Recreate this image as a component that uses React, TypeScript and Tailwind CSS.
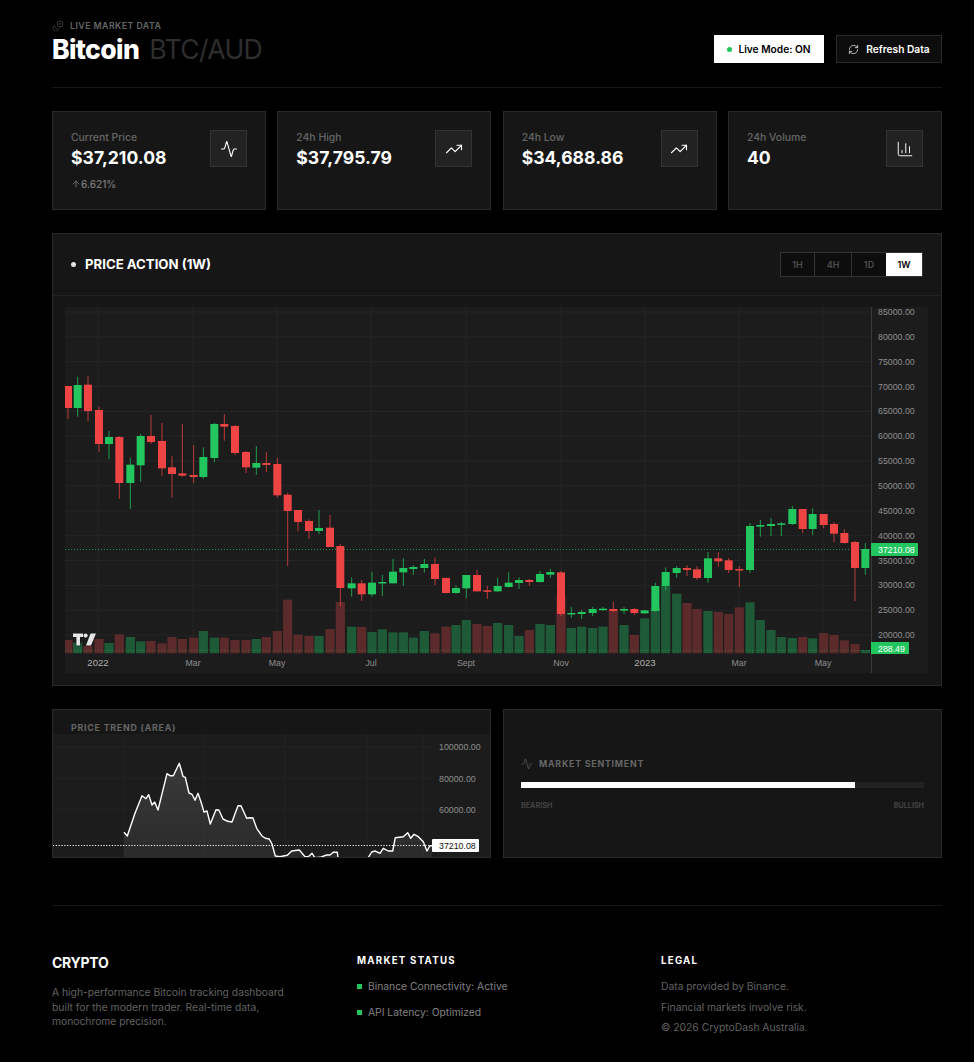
import { Activity, ArrowUp, ChartColumn, Coins, RefreshCw, TrendingUp } from "lucide-react";

// [x, wickTop, wickBottom, bodyTop, bodyBottom, up, volumeTop], measured on 3x crops
type Row = [number, number, number, number, number, number, number];
const groupA: Row[] = [
  [54, 78, 177, 78, 144, 0, 300], [83, 50, 170, 75, 144, 1, 308], [114, 48, 185, 74, 153, 0, 318], [147, 140, 276, 150, 252, 0, 297],
  [177, 213, 298, 231, 252, 1, 309], [208, 228, 417, 231, 369, 0, 283], [241, 294, 447, 314, 369, 1, 291], [272, 222, 365, 228, 316, 1, 304],
  [303, 165, 252, 228, 246, 0, 303], [336, 189, 348, 243, 325, 0, 310], [366, 289, 413, 322, 342, 0, 291], [397, 192, 350, 340, 347, 0, 297],
  [431, 255, 369, 345, 351, 0, 293], [460, 262, 356, 291, 351, 1, 273], [493, 189, 307, 192, 294, 1, 293], [523, 162, 242, 192, 200, 0, 293],
  [555, 195, 285, 198, 279, 0, 300], [588, 273, 339, 276, 322, 0, 300], [619, 258, 345, 309, 323, 1, 297], [649, 276, 336, 309, 315, 0, 291],
  [682, 294, 413, 312, 406, 0, 273], [713, 398, 618, 404, 453, 0, 179], [744, 450, 514, 450, 486, 0, 284], [777, 478, 537, 483, 513, 0, 288],
  [807, 450, 522, 504, 513, 1, 288], [840, 465, 561, 503, 561, 0, 267], [871, 552, 738, 558, 684, 0, 186],
];
const groupB: Row[] = [
  [5, 232, 290, 250, 265, 1, 380], [35, 240, 303, 250, 283, 0, 381], [66, 215, 290, 248, 283, 1, 396], [97, 225, 288, 246, 250, 1, 388],
  [129, 177, 250, 215, 250, 1, 397], [160, 175, 258, 204, 217, 1, 397], [190, 195, 225, 201, 207, 1, 413], [223, 177, 218, 192, 204, 1, 393],
  [255, 173, 255, 192, 237, 0, 400], [288, 232, 281, 234, 279, 0, 380], [318, 256, 281, 264, 279, 1, 375], [349, 225, 294, 225, 265, 1, 360],
  [381, 210, 275, 225, 274, 0, 372], [412, 258, 297, 271, 274, 0, 378], [443, 234, 275, 258, 274, 1, 369], [476, 217, 262, 248, 261, 1, 375],
  [507, 232, 267, 240, 249, 1, 408], [538, 237, 258, 240, 246, 0, 390], [570, 213, 248, 222, 246, 1, 372], [601, 207, 234, 216, 224, 1, 375],
  [633, 213, 348, 217, 342, 0, 288], [664, 321, 354, 339, 342, 1, 384], [695, 330, 357, 336, 342, 1, 380], [728, 321, 348, 327, 339, 1, 384],
  [759, 321, 333, 326, 330, 1, 380], [790, 305, 336, 327, 333, 0, 330], [822, 321, 342, 327, 332, 1, 375], [853, 324, 345, 327, 339, 0, 405],
  [884, 330, 342, 331, 340, 1, 355], [916, 248, 335, 258, 333, 1, 321],
];
const groupC: Row[] = [
  [47, 232, 300, 246, 288, 1, 287], [80, 228, 263, 234, 249, 1, 311], [111, 225, 258, 234, 240, 0, 339], [141, 229, 270, 238, 264, 0, 357],
  [174, 186, 278, 205, 264, 1, 363], [205, 186, 230, 205, 214, 0, 366], [236, 204, 249, 211, 240, 0, 372], [268, 228, 291, 237, 240, 0, 352],
  [300, 99, 248, 108, 240, 1, 337], [331, 90, 140, 105, 110, 1, 390], [363, 84, 138, 102, 108, 1, 420], [394, 96, 138, 100, 104, 1, 441],
  [427, 48, 105, 57, 102, 1, 444], [458, 57, 129, 57, 117, 0, 441], [488, 55, 135, 72, 117, 1, 445], [521, 72, 115, 72, 105, 0, 429],
  [552, 96, 157, 102, 131, 0, 435], [583, 117, 161, 129, 159, 0, 451], [615, 153, 333, 156, 234, 0, 462], [646, 159, 255, 177, 234, 1, 480],
];

const candles = [
  ...groupA.map((r) => ({ x: 50 + r[0] / 3, wt: 360 + r[1] / 3, wb: 360 + r[2] / 3, bt: 360 + r[3] / 3, bb: 360 + r[4] / 3, up: r[5], vt: 540 + r[6] / 3 })),
  ...groupB.map((r) => ({ x: 350 + r[0] / 3, wt: 500 + r[1] / 3, wb: 500 + r[2] / 3, bt: 500 + r[3] / 3, bb: 500 + r[4] / 3, up: r[5], vt: 500 + r[6] / 3 })),
  ...groupC.map((r) => ({ x: 650 + r[0] / 3, wt: 490 + r[1] / 3, wb: 490 + r[2] / 3, bt: 490 + r[3] / 3, bb: 490 + r[4] / 3, up: r[5], vt: 490 + r[6] / 3 })),
];

const priceLabels = ["85000.00", "80000.00", "75000.00", "70000.00", "65000.00", "60000.00", "55000.00", "50000.00", "45000.00", "40000.00", "35000.00", "30000.00", "25000.00", "20000.00"];
const timeLabels: [number, string, boolean][] = [
  [98, "2022", true], [193, "Mar", false], [277, "May", false], [371, "Jul", false], [466, "Sept", false],
  [561, "Nov", false], [645, "2023", true], [739, "Mar", false], [823, "May", false],
];

function CandleChart() {
  const green = "#22c55e";
  const red = "#ef4444";
  return (
    <svg viewBox="65 307 863 366" className="block w-[863px] h-[366px] bg-[#1c1c1c]">
      <defs>
        <clipPath id="plot">
          <rect x="65" y="307" width="806" height="346.5" />
        </clipPath>
      </defs>
      {priceLabels.map((_, i) => (
        <line key={i} x1="65" x2="871" y1={312 + i * 24.85} y2={312 + i * 24.85} stroke="#252525" strokeWidth="1" />
      ))}
      {timeLabels.map(([x], i) => (
        <line key={i} x1={x} x2={x} y1="307" y2="653" stroke="#252525" strokeWidth="1" />
      ))}
      <g clipPath="url(#plot)">
        {candles.map((c, i) => (
          <rect key={i} x={c.x - 4.6} y={c.vt} width="9.2" height={653.5 - c.vt} fill={c.up ? "#1f5a38" : "#5c2a2a"} />
        ))}
        <line x1="65" x2="871" y1="549.5" y2="549.5" stroke="#22c55e" strokeOpacity="0.7" strokeDasharray="1 2" />
        <line x1="65" x2="871" y1="650.5" y2="650.5" stroke="#22c55e" strokeOpacity="0.4" strokeDasharray="1 2" />
        {candles.map((c, i) => (
          <g key={i} fill={c.up ? green : red}>
            <rect x={c.x - 0.5} y={c.wt} width="1" height={c.wb - c.wt} opacity="0.75" />
            <rect x={c.x - 4} y={c.bt} width="8" height={Math.max(c.bb - c.bt, 1.5)} />
          </g>
        ))}
      </g>
      <line x1="871.5" x2="871.5" y1="307" y2="673" stroke="#3a3a3a" />
      {priceLabels.map((p, i) => (
        <text key={p} x="878" y={315 + i * 24.85} fontSize="8.8" fill="#8f8f8f" fontFamily="Liberation Sans, sans-serif">
          {p}
        </text>
      ))}
      {timeLabels.map(([x, t, big]) => (
        <text key={x} x={x} y="666" textAnchor="middle" fontSize={big ? 9.6 : 8.8} fill={big ? "#b0b0b0" : "#8f8f8f"} fontFamily="Liberation Sans, sans-serif">
          {t}
        </text>
      ))}
      <rect x="871" y="543" width="47" height="13" rx="1" fill={green} />
      <text x="878" y="553" fontSize="8.8" fill="#fff" fontFamily="Liberation Sans, sans-serif">37210.08</text>
      <rect x="871" y="642" width="38" height="12" fill={green} />
      <text x="878" y="651.5" fontSize="8.8" fill="#fff" fontFamily="Liberation Sans, sans-serif">288.49</text>
      {/* chart library mark */}
      <g fill="#e5e5e5" stroke="#111" strokeWidth="0.6" paintOrder="stroke">
        <path d="M73 633.5h10v3.6h-3v8.5h-3.6v-8.5H73z" />
        <circle cx="85.6" cy="635.6" r="2.1" />
        <path d="M90.5 633.5h5.5l-5 12.1h-5z" />
      </g>
    </svg>
  );
}

const trendPts: [number, number][] = [
  [222, 397], [232, 408], [255, 340], [276, 287], [288, 296], [296, 284], [306, 315], [314, 306], [324, 330], [351, 221], [360, 227], [370, 227],
  [388, 190], [399, 229], [406, 232], [417, 279], [426, 283], [435, 301], [444, 280], [453, 306], [462, 336], [471, 333], [481, 372], [498, 329],
  [507, 331], [519, 357], [533, 364], [546, 366], [564, 317], [573, 317], [590, 355], [600, 353], [609, 354], [620, 385], [636, 408], [646, 415],
  [658, 417], [666, 432], [676, 468], [690, 470], [700, 468], [712, 466], [725, 453], [748, 450], [765, 470], [775, 470], [786, 460], [795, 473],
  [810, 472], [830, 465], [840, 465], [850, 457], [862, 457], [865, 480], [950, 480], [965, 456], [975, 453], [990, 460], [1000, 445], [1015, 453],
  [1028, 453], [1036, 413], [1060, 410], [1073, 398], [1082, 415], [1092, 403], [1105, 410], [1120, 425], [1131, 453], [1140, 437], [1146, 437],
];

function TrendChart() {
  const pts = trendPts.map(([x, y]) => `${(50 + x / 3).toFixed(1)},${(700 + y / 3).toFixed(1)}`).join(" ");
  const first = (50 + 222 / 3).toFixed(1);
  const last = (50 + 1146 / 3).toFixed(1);
  return (
    <svg viewBox="53 734 437 123" className="block w-[437px] h-[123px] bg-[#1c1c1c]">
      <defs>
        <linearGradient id="area" x1="0" y1="0" x2="0" y2="1">
          <stop offset="0" stopColor="#fff" stopOpacity="0.13" />
          <stop offset="1" stopColor="#fff" stopOpacity="0.06" />
        </linearGradient>
      </defs>
      {[747, 778, 809.5, 841].map((y) => (
        <line key={y} x1="53" x2="432" y1={y} y2={y} stroke="#222" />
      ))}
      {[124, 204, 285, 367, 423].map((x) => (
        <line key={x} x1={x} x2={x} y1="734" y2="857" stroke="#222" />
      ))}
      <polygon points={`${first},860 ${pts} ${last},860`} fill="url(#area)" />
      <polyline points={pts} fill="none" stroke="#fff" strokeWidth="1.4" strokeLinejoin="round" />
      <line x1="53" x2="432" y1="845.5" y2="845.5" stroke="#fff" strokeDasharray="1.2 1.6" />
      {[["100000.00", 750], ["80000.00", 781.5], ["60000.00", 813]].map(([t, y]) => (
        <text key={t} x="439" y={y} fontSize="8.8" fill="#8f8f8f" fontFamily="Liberation Sans, sans-serif">
          {t}
        </text>
      ))}
      <rect x="432" y="839" width="47" height="13" rx="1" fill="#fff" />
      <text x="439" y="849" fontSize="8.8" fill="#111" fontFamily="Liberation Sans, sans-serif">37210.08</text>
    </svg>
  );
}

function StatCard({ label, value, change, icon }: { label: string; value: string; change?: string; icon: React.ReactNode }) {
  return (
    <div className="h-[99px] bg-[#161616] border border-[#2a2a2a] pl-[18px] pr-[18px] pt-[18px] flex justify-between">
      <div>
        <div className="text-[10.4px] leading-[15px] font-medium text-[#666]">{label}</div>
        <div className="text-[17.6px] leading-[26px] font-bold text-white">{value}</div>
        {change && (
          <div className="mt-[6px] flex items-center text-[10px] leading-[14px] font-medium text-[#7a7a7a]">
            <ArrowUp size={10} strokeWidth={2} />
            {change}
          </div>
        )}
      </div>
      <div className="w-[37px] h-[37px] bg-[#222] border border-[#333] flex items-center justify-center text-white">{icon}</div>
    </div>
  );
}

export default function App() {
  return (
    <div className="min-h-[1062px] bg-black pl-[52px] pr-[32px] pt-[20px] font-['Inter',sans-serif]">
      {/* Header */}
      <div className="h-[68px] border-b border-[#161616] flex justify-between">
        <div>
          <div className="flex items-center gap-[6px] h-[12px]">
            <Coins size={12} strokeWidth={1.25} className="text-[#555] rotate-90" />
            <span className="text-[8.8px] font-semibold tracking-[0.05em] text-[#666]">LIVE MARKET DATA</span>
          </div>
          <h1 className="mt-[2px] text-[26.6px] leading-[30px] tracking-[-0.025em] font-extrabold text-white">
            Bitcoin <span className="ml-[5px] font-normal text-[#2e2e2e]">BTC/AUD</span>
          </h1>
        </div>
        <div className="flex gap-[12px] pt-[15px] items-start">
          <div className="w-[110px] h-[28px] pt-px bg-white flex items-center justify-center gap-[6px] text-[10.2px] font-semibold text-black">
            <span className="w-[5px] h-[5px] rounded-full bg-[#22c55e]" />
            Live Mode: ON
          </div>
          <div className="w-[106px] h-[28px] pt-px bg-[#0d0d0d] border border-[#2a2a2a] flex items-center justify-center gap-[7px] text-[10.2px] font-semibold text-white">
            <RefreshCw size={11} strokeWidth={1.5} />
            Refresh Data
          </div>
        </div>
      </div>

      {/* Stats */}
      <div className="mt-[23px] grid grid-cols-4 gap-[11.3px]">
        <StatCard label="Current Price" value="$37,210.08" change="6.621%" icon={<Activity size={18} strokeWidth={1.5} />} />
        <StatCard label="24h High" value="$37,795.79" icon={<TrendingUp size={18} strokeWidth={1.5} />} />
        <StatCard label="24h Low" value="$34,688.86" icon={<TrendingUp size={18} strokeWidth={1.5} />} />
        <StatCard label="24h Volume" value="40" icon={<ChartColumn size={18} strokeWidth={1.25} />} />
      </div>

      {/* Price action */}
      <div className="mt-[23px] h-[453px] bg-[#161616] border border-[#2a2a2a]">
        <div className="h-[62px] border-b border-[#222] pl-[18px] pr-[18px] flex items-center justify-between">
          <div className="flex items-center gap-[9px]">
            <span className="w-[5px] h-[5px] rounded-full bg-[#e5e5e5]" />
            <span className="text-[13.2px] font-bold text-white">PRICE ACTION (1W)</span>
          </div>
          <div className="flex h-[25px] border border-[#333] text-[9px] font-semibold text-[#4d4d4d]">
            <div className="w-[34px] bg-[#0d0d0d] border-r border-[#333] flex items-center justify-center">1H</div>
            <div className="w-[37px] bg-[#0d0d0d] border-r border-[#333] flex items-center justify-center">4H</div>
            <div className="w-[34px] bg-[#0d0d0d] flex items-center justify-center">1D</div>
            <div className="w-[36px] bg-white text-black flex items-center justify-center">1W</div>
          </div>
        </div>
        <div className="pt-[11px] pl-[12px]">
          <CandleChart />
        </div>
      </div>

      {/* Lower panels */}
      <div className="mt-[23px] grid grid-cols-2 gap-[12px]">
        <div className="h-[149px] bg-[#161616] border border-[#2a2a2a] overflow-hidden">
          <div className="h-[24px] pl-[18px] pt-[12px] text-[8.8px] leading-[11px] font-bold tracking-[0.09em] text-[#666]">PRICE TREND (AREA)</div>
          <TrendChart />
        </div>
        <div className="h-[149px] bg-[#161616] border border-[#2a2a2a] px-[17px] flex flex-col justify-center">
          <div className="flex items-center gap-[6px] text-[8.8px] font-bold tracking-[0.09em] text-[#666]">
            <Activity size={12} strokeWidth={1.25} />
            MARKET SENTIMENT
          </div>
          <div className="mt-[11px] h-[6px] bg-[#222]">
            <div className="h-full w-[83%] bg-white" />
          </div>
          <div className="mt-[13px] flex justify-between text-[7.2px] leading-[9px] font-bold text-[#444]">
            <span>BEARISH</span>
            <span>BULLISH</span>
          </div>
        </div>
      </div>

      {/* Footer */}
      <div className="mt-[47px] border-t border-[#161616] pt-[47px] grid grid-cols-[305px_304px_1fr]">
        <div>
          <div className="text-[14px] leading-[20px] font-bold tracking-[-0.02em] text-white">CRYPTO</div>
          <p className="mt-[12px] w-[240px] text-[10.3px] leading-[14.5px] text-[#626262]">
            A high-performance Bitcoin tracking dashboard built for the modern trader. Real-time data, monochrome precision.
          </p>
        </div>
        <div>
          <div className="pt-px text-[9.7px] leading-[14px] font-bold tracking-[0.13em] text-white">MARKET STATUS</div>
          <div className="mt-[11px] flex items-center gap-[6px] text-[10.3px] leading-[14px] text-[#808080]">
            <span className="w-[5px] h-[5px] bg-[#22c55e]" />
            Binance Connectivity: Active
          </div>
          <div className="mt-[12px] flex items-center gap-[6px] text-[10.3px] leading-[14px] text-[#808080]">
            <span className="w-[5px] h-[5px] bg-[#22c55e]" />
            API Latency: Optimized
          </div>
        </div>
        <div>
          <div className="pt-px text-[9.7px] leading-[14px] font-bold tracking-[0.13em] text-white">LEGAL</div>
          <div className="mt-[11px] text-[10.3px] leading-[14px] text-[#626262]">Data provided by Binance.</div>
          <div className="mt-[7px] text-[10.3px] leading-[14px] text-[#626262]">Financial markets involve risk.</div>
          <div className="mt-[6px] text-[10.3px] leading-[14px] text-[#626262]">© 2026 CryptoDash Australia.</div>
        </div>
      </div>
    </div>
  );
}
